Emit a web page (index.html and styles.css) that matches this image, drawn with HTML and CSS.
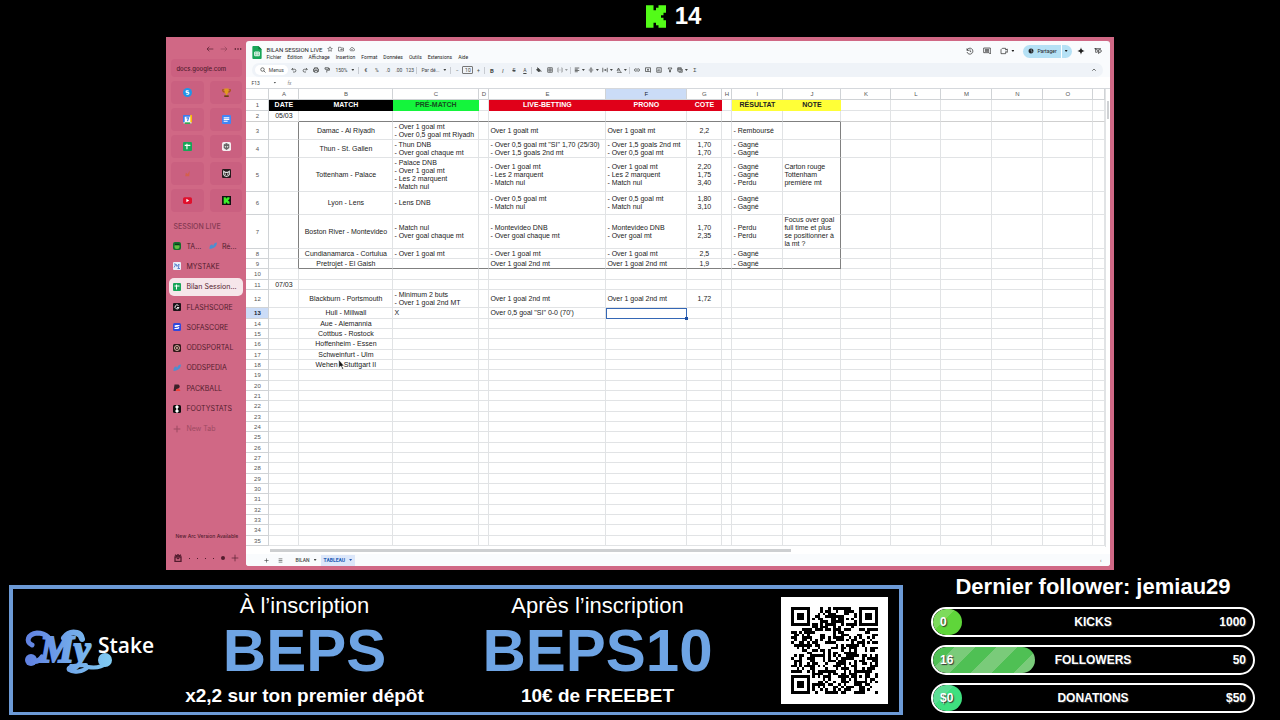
FILE: index.html
```html
<!DOCTYPE html>
<html lang="fr">
<head>
<meta charset="utf-8">
<title>Bilan session live</title>
<link rel="stylesheet" href="styles.css">
</head>
<body>
<svg class="sprite" aria-hidden="true">
  <symbol id="back" viewBox="0 0 24 24"><path d="M22 12H3M10 5l-7 7 7 7"/></symbol>
  <symbol id="fwd" viewBox="0 0 24 24"><path d="M2 12h19M14 5l7 7-7 7"/></symbol>
  <symbol id="dots" viewBox="0 0 24 24"><path d="M2 12h4M10 12h4M18 12h4" stroke-width="4"/></symbol>
  <symbol id="plus" viewBox="0 0 24 24"><path d="M12 2v20M2 12h20"/></symbol>
  <symbol id="star" viewBox="0 0 24 24"><path d="M12 3l3 6 6 1-4.500 4.500 1 6.500-5.500-3-5.500 3 1-6.500L3 10l6-1z"/></symbol>
  <symbol id="folder" viewBox="0 0 24 24"><path d="M2 5h8l2 3h10v12H2zM9 14h8M14 11l3 3-3 3"/></symbol>
  <symbol id="cloud" viewBox="0 0 24 24"><path d="M7 19h11a4 4 0 0 0 1-8 7 7 0 0 0-13-1 5 5 0 0 0 1 9zM8 13l3 3 5-5"/></symbol>
  <symbol id="search" viewBox="0 0 24 24"><circle cx="10" cy="10" r="7"/><path d="M15 15l7 7"/></symbol>
  <symbol id="undo" viewBox="0 0 24 24"><path d="M8 4L3 9l5 5M3 9h11a5 5 0 0 1 0 11H8"/></symbol>
  <symbol id="redo" viewBox="0 0 24 24"><path d="M16 4l5 5-5 5M21 9H10a5 5 0 0 0 0 11h6"/></symbol>
  <symbol id="print" viewBox="0 0 24 24"><path d="M6 8V3h12v5M6 18H2V8h20v10h-4M6 14h12v7H6z"/></symbol>
  <symbol id="roller" viewBox="0 0 24 24"><path d="M4 3h14v6H4zM18 6h4v7H11v9" /></symbol>
  <symbol id="fill" viewBox="0 0 24 24"><path d="M5 2l13 11-7 7-9-9 7-7" fill="currentColor"/><path d="M20 15v5"/></symbol>
  <symbol id="grid" viewBox="0 0 24 24"><path d="M3 3h18v18H3zM12 3v18M3 12h18"/></symbol>
  <symbol id="merge" viewBox="0 0 24 24"><path d="M8 4H3v16h5M16 4h5v16h-5M3 12h7M14 12h7"/></symbol>
  <symbol id="align" viewBox="0 0 24 24"><path d="M3 4h18M3 9h12M3 14h18M3 19h12"/></symbol>
  <symbol id="valign" viewBox="0 0 24 24"><path d="M3 12h18M12 1v8M9 6l3 3 3-3M12 23v-8M9 18l3-3 3 3"/></symbol>
  <symbol id="wrap" viewBox="0 0 24 24"><path d="M3 3v18M21 3v18M7 12h9M13 8l4 4-4 4"/></symbol>
  <symbol id="rotate" viewBox="0 0 24 24"><path d="M4 16l6-12 6 12M6 12h8M4 21h17M18 18l3 3-3 3"/></symbol>
  <symbol id="link" viewBox="0 0 24 24"><path d="M10 7H7a5 5 0 0 0 0 10h3M14 7h3a5 5 0 0 1 0 10h-3M8 12h8"/></symbol>
  <symbol id="comment" viewBox="0 0 24 24"><path d="M2 3h20v18l-4-3H2zM12 7v8M8 11h8"/></symbol>
  <symbol id="chart" viewBox="0 0 24 24"><path d="M3 3h18v18H3zM8 17v-6M12 17V7M16 17v-3"/></symbol>
  <symbol id="funnel" viewBox="0 0 24 24"><path d="M4 4h16l-6 8v8h-4v-8z"/></symbol>
  <symbol id="views" viewBox="0 0 24 24"><path d="M3 3h14v14H3zM7 21h14V8M3 7h14M3 11h14" stroke-width="3"/></symbol>
  <symbol id="history" viewBox="0 0 24 24"><path d="M3 4v6h6M3 10a9 9 0 1 1 0 5M12 7v6l4 2"/></symbol>
  <symbol id="notes" viewBox="0 0 24 24"><path d="M2 3h20v18l-4-4H2zM6 7h12M6 10h12M6 13h12"/></symbol>
  <symbol id="camera" viewBox="0 0 24 24"><path d="M7 4h10v5l5-3v10l-5-2v6H3V8z"/></symbol>
  <symbol id="globe" viewBox="0 0 24 24"><circle cx="12" cy="12" r="9" fill="currentColor"/><path d="M14 5l-3 4 5 3-1 6" stroke="#c2e7ff"/></symbol>
  <symbol id="spark" viewBox="0 0 24 24"><path d="M12 1c1 7 4 10 11 11-7 1-10 4-11 11-1-7-4-10-11-11 7-1 10-4 11-11z" fill="currentColor" stroke="none"/></symbol>
  <symbol id="account" viewBox="0 0 24 24"><path d="M5 3v13h3a4 4 0 0 0 0-8H5M14 21V8h4a4 4 0 0 1 0 8h-4M1 5h20"/></symbol>
  <symbol id="up" viewBox="0 0 24 24"><path d="M5 15l7-7 7 7"/></symbol>
  <symbol id="list" viewBox="0 0 24 24"><path d="M3 4h18M3 12h18M3 20h18"/></symbol>
  <symbol id="archive" viewBox="0 0 24 24"><path d="M3 9h18v13H3zM3 2l5 4 4-4 4 4 5-4M8 14h8" stroke-width="4"/></symbol>
  <symbol id="sheets" viewBox="0 0 16 16"><rect width="16" height="16" rx="2" fill="#18a558" stroke="none"/><path d="M3 6h10M7 3v10" stroke="#fff" stroke-width="2"/></symbol>
  <symbol id="leaf" viewBox="0 0 16 16"><path d="M1 14c0-7 2-9 6-9l1 3c2-5 4-7 8-7-1 8-5 12-15 13z" fill="#4d8fd0" stroke="none"/></symbol>
</svg>

<header class="counter">
  <svg class="kick" viewBox="0 0 8 9"><path d="M0 0h3v2h1V1h1V0h3v3H7v1H6v1h1v1h1v3H5V8H4V7H3v2H0z"/></svg>
  <span>14</span>
</header>

<main class="stage">
  <div class="window">
    <aside class="sidebar">
      <div class="nav">
        <button aria-label="Retour"><svg><use href="#back"/></svg></button>
        <button class="dim" aria-label="Suivant"><svg><use href="#fwd"/></svg></button>
        <button aria-label="Plus"><svg><use href="#dots"/></svg></button>
      </div>
      <button class="address">docs.google.com</button>
      <div class="pins">
        <button aria-label="Shazam"><svg viewBox="0 0 16 16"><circle cx="8" cy="8" r="8" fill="#2196e8"/><path d="M10 5H7a1 1 0 0 0 0 3h2a1 1 0 0 1 0 3H6" fill="none" stroke="#fff" stroke-width="2"/></svg></button>
        <button aria-label="Trophée"><svg viewBox="0 0 16 16"><path d="M4 1h8v5q0 4-3 4v3h3v2H4v-2h3v-3Q4 10 4 6z" fill="#e09a1c"/><path d="M4 3H1q0 4 4 4M12 3h3q0 4-4 4" fill="none" stroke="#a8551a" stroke-width="2"/><path d="M4 13h8v3H4z" fill="#6a3a1c"/></svg></button>
        <button aria-label="Agenda"><svg viewBox="0 0 16 16"><path d="M1 1h14v14H1z" fill="#fff"/><path d="M1 0h12v3H3v10H0V1z" fill="#3b7ded"/><path d="M13 0h3v13h-3z" fill="#fbbc04"/><path d="M3 13h10v3H3z" fill="#34a853"/><path d="M6 5h4l-2 6" fill="none" stroke="#3b7ded" stroke-width="2"/></svg></button>
        <button aria-label="Docs"><svg viewBox="0 0 16 16"><rect width="16" height="16" rx="2" fill="#4285f4"/><path d="M3 5h10M3 8h10M3 11h7" stroke="#fff" stroke-width="2"/></svg></button>
        <button aria-label="Sheets"><svg><use href="#sheets"/></svg></button>
        <button aria-label="ChatGPT"><svg viewBox="0 0 16 16"><rect width="16" height="16" rx="3" fill="#f4eef0"/><path d="M8 3l4 2v5l-4 3-4-3V5zM4 5l8 5M12 5l-8 5M8 3v10" fill="none" stroke="#666"/></svg></button>
        <button aria-label="Favori"><svg viewBox="0 0 16 16"><path d="M4 13l1-7 3 3 4-6-1 10z" fill="#d4604e"/></svg></button>
        <button aria-label="Chat"><svg viewBox="0 0 16 16"><rect width="16" height="16" rx="2" fill="#241a1c"/><path d="M3 4l3 2h4l3-2v6q-1 3-5 3t-5-3zM5 9h2M9 9h2" fill="none" stroke="#ddd"/></svg></button>
        <button aria-label="YouTube"><svg viewBox="0 0 16 16"><rect y="2" width="16" height="12" rx="3" fill="#e0102c"/><path d="M6 5l5 3-5 3z" fill="#fff"/></svg></button>
        <button aria-label="Kick"><svg viewBox="0 0 16 16"><rect width="16" height="16" fill="#111"/><path transform="translate(3 2) scale(1.3)" d="M0 0h3v2h1V1h1V0h3v3H7v1H6v1h1v1h1v3H5V8H4V7H3v2H0z" fill="#3df02c"/></svg></button>
      </div>
      <h2>SESSION LIVE</h2>
      <nav class="tabs">
        <div class="split">
          <a href="#"><svg viewBox="0 0 16 16"><rect width="16" height="16" rx="4" fill="#12702c"/><circle cx="8" cy="9" r="5" fill="#62c043"/><path d="M4 5h9" stroke="#0a3918" stroke-width="3"/></svg>TA...</a>
          <a href="#"><svg><use href="#leaf"/></svg>Ré...</a>
        </div>
        <a href="#"><svg viewBox="0 0 16 16"><rect width="16" height="16" rx="2" fill="#e9eef8"/><path d="M2 11l4-7 2 5 4-5-1 8M2 4h3M9 13h5" fill="none" stroke="#5a82cd" stroke-width="2"/></svg>MYSTAKE</a>
        <a href="#" class="active"><svg><use href="#sheets"/></svg>Bilan Session...</a>
        <a href="#"><svg viewBox="0 0 16 16"><rect width="16" height="16" rx="2" fill="#1c1418"/><path d="M11 5a4 4 0 1 0 1 4H8" fill="none" stroke="#eee" stroke-width="2"/></svg>FLASHSCORE</a>
        <a href="#"><svg viewBox="0 0 16 16"><rect width="16" height="16" rx="3" fill="#3048dc"/><path d="M13 5H5q-2 0-1 2l7 1q2 3-1 3H3" fill="none" stroke="#fff" stroke-width="2"/></svg>SOFASCORE</a>
        <a href="#"><svg viewBox="0 0 16 16"><rect width="16" height="16" rx="3" fill="#32191a"/><circle cx="8" cy="8" r="5" fill="none" stroke="#d5b4a4" stroke-width="2"/><circle cx="8" cy="8" r="2" fill="#d5b4a4"/></svg>ODDSPORTAL</a>
        <a href="#"><svg><use href="#leaf"/></svg>ODDSPEDIA</a>
        <a href="#"><svg viewBox="0 0 16 16"><path d="M3 1h8q5 4 0 8l-4 1-2 4H1z" fill="#3b2028"/><path d="M6 11l6-2 3 5H6z" fill="#ef4139"/></svg>PACKBALL</a>
        <a href="#"><svg viewBox="0 0 16 16"><rect width="16" height="16" rx="3" fill="#0c0c0c"/><path d="M8 2v12M5 5l3-3 3 3M5 11l3 3 3-3" fill="none" stroke="#fff" stroke-width="3"/></svg>FOOTYSTATS</a>
        <a href="#" class="new"><svg><use href="#plus"/></svg>New Tab</a>
      </nav>
      <p class="update">New Arc Version Available</p>
      <div class="spaces">
        <svg><use href="#archive"/></svg><i></i><i></i><i></i><i></i><i class="on"></i>
        <button aria-label="Nouveau"><svg><use href="#plus"/></svg></button>
      </div>
    </aside>

    <section class="sheet">
      <div class="docbar">
        <svg class="doclogo" viewBox="0 0 20 28"><path d="M2 0h11l7 7v19a2 2 0 0 1-2 2H2a2 2 0 0 1-2-2V2a2 2 0 0 1 2-2z" fill="#18a558"/><path d="M13 0l7 7h-7z" fill="#0c7a3c"/><path d="M5 13h10v8H5zM5 17h10M10 13v8" fill="none" stroke="#fff" stroke-width="2"/></svg>
        <div class="doctitle">
          <h1>BILAN SESSION LIVE <svg><use href="#star"/></svg><svg><use href="#folder"/></svg><svg><use href="#cloud"/></svg></h1>
          <div class="menus"><button>Fichier</button><button>Édition</button><button>Affichage</button><button>Insertion</button><button>Format</button><button>Données</button><button>Outils</button><button>Extensions</button><button>Aide</button></div>
        </div>
        <div class="actions">
          <button aria-label="Historique"><svg><use href="#history"/></svg></button>
          <button aria-label="Commentaires"><svg><use href="#notes"/></svg></button>
          <button class="meet caret" aria-label="Réunion"><svg><use href="#camera"/></svg></button>
          <div class="share"><button><svg><use href="#globe"/></svg>Partager</button><button class="more caret" aria-label="Options de partage"></button></div>
          <button aria-label="Gemini"><svg><use href="#spark"/></svg></button>
          <button aria-label="Compte"><svg><use href="#account"/></svg></button>
        </div>
      </div>

      <div class="toolbar">
        <button class="search"><svg><use href="#search"/></svg>Menus</button>
        <button aria-label="Annuler"><svg><use href="#undo"/></svg></button>
        <button aria-label="Rétablir"><svg><use href="#redo"/></svg></button>
        <button aria-label="Imprimer"><svg><use href="#print"/></svg></button>
        <button aria-label="Mise en forme"><svg><use href="#roller"/></svg></button>
        <span class="pick zoom caret"><select aria-label="Zoom"><option>150%</option></select></span>
        <hr>
        <button>€</button><button>%</button><button>.0</button><button>.00</button><button>123</button>
        <hr>
        <span class="pick font caret"><select aria-label="Police"><option>Par dé...</option></select></span>
        <hr>
        <button class="step">−</button><input class="size" aria-label="Taille" value="10"><button class="step">+</button>
        <hr>
        <button><b>B</b></button><button><em>I</em></button><button><s>S</s></button><button><u>A</u></button>
        <hr>
        <button aria-label="Remplissage"><svg><use href="#fill"/></svg></button>
        <button aria-label="Bordures"><svg><use href="#grid"/></svg></button>
        <button class="wide caret dim" aria-label="Fusionner"><svg><use href="#merge"/></svg></button>
        <hr>
        <button class="wide caret" aria-label="Alignement"><svg><use href="#align"/></svg></button>
        <button class="wide caret" aria-label="Alignement vertical"><svg><use href="#valign"/></svg></button>
        <button class="wide caret" aria-label="Retour à la ligne"><svg><use href="#wrap"/></svg></button>
        <button class="wide caret" aria-label="Rotation"><svg><use href="#rotate"/></svg></button>
        <hr>
        <button aria-label="Lien"><svg><use href="#link"/></svg></button>
        <button aria-label="Commentaire"><svg><use href="#comment"/></svg></button>
        <button aria-label="Graphique"><svg><use href="#chart"/></svg></button>
        <button aria-label="Filtre"><svg><use href="#funnel"/></svg></button>
        <button class="wide caret" aria-label="Vues"><svg><use href="#views"/></svg></button>
        <button>Σ</button>
        <button class="collapse" aria-label="Réduire"><svg><use href="#up"/></svg></button>
      </div>

      <div class="formula">
        <span class="pick caret"><input aria-label="Cellule" value="F13"></span>
        <label for="fx">fx</label><input id="fx">
      </div>

      <div class="gridwrap">
        <table>
          <colgroup><col class="c0"><col class="cA"><col class="cB"><col class="cC"><col class="cD"><col class="cE"><col class="cF"><col class="cG"><col class="cD"><col class="cI"><col class="cJ"><col class="cK"><col class="cK"><col class="cM"><col class="cM"><col class="cK"><col></colgroup>
          <thead>
            <tr><th></th><th>A</th><th>B</th><th>C</th><th>D</th><th>E</th><th class="sel">F</th><th>G</th><th>H</th><th>I</th><th>J</th><th>K</th><th>L</th><th>M</th><th>N</th><th>O</th><th></th></tr>
          </thead>
          <tbody id="cells">
            <tr class="h11 titles"><th>1</th><td class="black">DATE</td><td class="black">MATCH</td><td class="green">PRÉ-MATCH</td><td></td><td class="red">LIVE-BETTING</td><td class="red">PRONO</td><td class="red">COTE</td><td></td><td class="yellow">RÉSULTAT</td><td class="yellow">NOTE</td></tr>
            <tr class="h11 frozen"><th>2</th><td>05/03</td></tr>
            <tr class="h18 boxed"><th>3</th><td></td><td>Damac - Al Riyadh</td><td>- Over 1 goal mt<br>- Over 0,5 goal mt Riyadh</td><td></td><td>Over 1 goalt mt</td><td>Over 1 goalt mt</td><td>2,2</td><td></td><td>- Remboursé</td><td></td></tr>
            <tr class="h18 boxed"><th>4</th><td></td><td>Thun - St. Gallen</td><td>- Thun DNB<br>- Over goal chaque mt</td><td></td><td>- Over 0,5 goal mt "SI" 1,70 (25/30)<br>- Over 1,5 goals 2nd mt</td><td>- Over 1,5 goals 2nd mt<br>- Over 0,5 goal mt</td><td>1,70<br>1,70</td><td></td><td>- Gagné<br>- Gagné</td><td></td></tr>
            <tr class="h34 boxed"><th>5</th><td></td><td>Tottenham - Palace</td><td>- Palace DNB<br>- Over 1 goal mt<br>- Les 2 marquent<br>- Match nul</td><td></td><td>- Over 1 goal mt<br>- Les 2 marquent<br>- Match nul</td><td>- Over 1 goal mt<br>- Les 2 marquent<br>- Match nul</td><td>2,20<br>1,75<br>3,40</td><td></td><td>- Gagné<br>- Gagné<br>- Perdu</td><td>Carton rouge<br>Tottenham<br>première mt</td></tr>
            <tr class="h23 boxed"><th>6</th><td></td><td>Lyon - Lens</td><td>- Lens DNB</td><td></td><td>- Over 0,5 goal mt<br>- Match nul</td><td>- Over 0,5 goal mt<br>- Match nul</td><td>1,80<br>3,10</td><td></td><td>- Gagné<br>- Gagné</td><td></td></tr>
            <tr class="h34 boxed"><th>7</th><td></td><td>Boston River - Montevideo</td><td>- Match nul<br>- Over goal chaque mt</td><td></td><td>- Montevideo DNB<br>- Over goal chaque mt</td><td>- Montevideo DNB<br>- Over goal mt</td><td>1,70<br>2,35</td><td></td><td>- Perdu<br>- Perdu</td><td>Focus over goal<br>full time et plus<br>se positionner à<br>la mt ?</td></tr>
            <tr class="h10 boxed"><th>8</th><td></td><td>Cundianamarca - Cortulua</td><td>- Over 1 goal mt</td><td></td><td>- Over 1 goal mt</td><td>- Over 1 goal mt</td><td>2,5</td><td></td><td>- Gagné</td><td></td></tr>
            <tr class="h10 boxed last"><th>9</th><td></td><td>Pretrojet - El Gaish</td><td></td><td></td><td>Over 1 goal 2nd mt</td><td>Over 1 goal 2nd mt</td><td>1,9</td><td></td><td>- Gagné</td><td></td></tr>
            <tr class="h11"><th>10</th></tr>
            <tr class="h10"><th>11</th><td>07/03</td></tr>
            <tr class="h18"><th>12</th><td></td><td>Blackburn - Portsmouth</td><td>- Minimum 2 buts<br>- Over 1 goal 2nd MT</td><td></td><td>Over 1 goal 2nd mt</td><td>Over 1 goal 2nd mt</td><td>1,72</td></tr>
            <tr class="h11"><th class="sel">13</th><td></td><td>Hull - Millwall</td><td>X</td><td></td><td>Over 0,5 goal "SI" 0-0 (70')</td><td class="cursor"></td></tr>
            <tr class="h10"><th>14</th><td></td><td>Aue - Alemannia</td></tr>
            <tr class="h10"><th>15</th><td></td><td>Cottbus - Rostock</td></tr>
            <tr class="h11"><th>16</th><td></td><td>Hoffenheim - Essen</td></tr>
            <tr class="h10"><th>17</th><td></td><td>Schweinfurt - Ulm</td></tr>
            <tr class="h10"><th>18</th><td></td><td class="pointed">Wehen - Stuttgart II<svg class="pointer" viewBox="0 0 10 16"><path d="M1 1v12l3-3 2 5 2-1-2-4h3z" fill="#111" stroke="#fff"/></svg></td></tr>
          </tbody>
        </table>
        <div class="vscroll"><i></i></div>
      </div>
      <div class="hscroll"><i></i></div>
      <div class="sheettabs">
        <button aria-label="Ajouter"><svg><use href="#plus"/></svg></button>
        <button aria-label="Feuilles"><svg><use href="#list"/></svg></button>
        <button class="tab caret">BILAN</button>
        <button class="tab caret current">TABLEAU</button>
        <span class="chev">‹</span>
      </div>
    </section>
  </div>
</main>

<footer class="overlay">
  <section class="banner">
    <svg class="logo" viewBox="0 0 132 54" role="img" aria-label="MyStake">
      <defs><linearGradient id="blue" gradientUnits="userSpaceOnUse" x1="0" y1="0" x2="90" y2="0"><stop offset="0" stop-color="#6080e2"/><stop offset="1" stop-color="#82cdf2"/></linearGradient></defs>
      <g fill="none" stroke="url(#blue)" stroke-linecap="round">
        <path d="M8 17C1 14 4 6 13 5q7 0 11 4" stroke-width="5"/>
        <path d="M7 33q7 2 11-4" stroke-width="5"/>
        <path d="M40 10q5-7 13-5 4 1 5 6" stroke-width="6"/>
        <path d="M62 37c-7 0-20 1-17 5 4 3 14 2 19-3q12 2 18-4" stroke-width="4"/>
      </g>
      <circle cx="7" cy="32" r="6" fill="url(#blue)"/><circle cx="81" cy="32" r="7" fill="url(#blue)"/>
      <text x="16" y="34" class="my" fill="url(#blue)" stroke="url(#blue)">My</text>
      <text x="74" y="25" class="stake">Stake</text>
    </svg>
    <div class="offer"><p>À l’inscription</p><strong>BEPS</strong><b>x2,2 sur ton premier dépôt</b></div>
    <div class="offer"><p>Après l’inscription</p><strong>BEPS10</strong><b>10€ de FREEBET</b></div>
    <svg class="qr" viewBox="-4 -4 41 41" shape-rendering="crispEdges" role="img" aria-label="QR code"><path id="modules"/></svg>
  </section>
  <section class="goals">
    <h2>Dernier follower: jemiau29</h2>
    <div class="goal kicks"><i style="width:9%"></i><span>0</span><b>KICKS</b><span>1000</span></div>
    <div class="goal followers"><i style="width:32%"></i><span>16</span><b>FOLLOWERS</b><span>50</span></div>
    <div class="goal donations"><i style="width:9%"></i><span>$0</span><b>DONATIONS</b><span>$50</span></div>
  </section>
</footer>
<script src="script.js"></script>
</body>
</html>
```
FILE: styles.css
```css
* { box-sizing: border-box; }
body {
  margin: 0; height: 100vh; background: #000; color: #fff;
  font-family: "Liberation Sans", Arial, sans-serif;
  display: flex; flex-direction: column; overflow: hidden;
}
h1, h2, p { margin: 0; font-weight: inherit; }
a { color: inherit; text-decoration: none; }
button, input, select {
  font: inherit; color: inherit; background: none; border: 0; padding: 0; margin: 0;
  min-width: 0; appearance: none; border-radius: 0;
}
.sprite { position: absolute; width: 0; height: 0; }
svg { display: block; flex: none; }
button svg, .docbar svg, .spaces svg { stroke: currentColor; stroke-width: 2; fill: none; }
.pins svg { stroke: none; }

.counter { height: 37px; flex: none; display: flex; justify-content: center; align-items: center; gap: 9px; padding: 0 0 5px 67px; font-size: 24px; font-weight: bold; }
.kick { width: 20px; height: 23px; fill: #53fc18; }

.stage { flex: 1; min-height: 0; display: flex; padding: 0 13%; }
.window { flex: 1; min-width: 0; min-height: 0; display: flex; background: #d06885; padding: 4px 4px 4px 0; font-family: Inter, sans-serif; }

.sidebar { width: 80px; flex: none; padding: 2px 4px 0 5px; display: flex; flex-direction: column; color: #531c2e; }
.nav { display: flex; justify-content: flex-end; gap: 6px; height: 12px; align-items: center; }
.nav svg { width: 8px; height: 8px; }
.dim { opacity: .5; }
.address { height: 18px; flex: none; margin-top: 4px; padding-left: 5px; text-align: left; font-size: 6px; font-weight: 500; border-radius: 4px; background: #cb6080; }
.pins { margin-top: 4px; display: grid; grid-template-columns: 1fr 1fr; gap: 4px 6px; }
.pins button { height: 23px; border-radius: 4px; background: #ca6080; display: grid; place-items: center; }
.pins svg { width: 9px; height: 9px; }
.sidebar h2 { margin: 8px 0 0 2px; height: 14px; line-height: 14px; font-size: 7px; color: #843952; font-weight: 500; }
.tabs { display: grid; grid-auto-rows: 1fr; height: 203px; flex: none; margin-top: 2px; font-size: 7px; }
.tabs a { display: flex; align-items: center; gap: 5px; padding-left: 2px; margin: 1px 0; border-radius: 5px; white-space: nowrap; }
.tabs svg { width: 8px; height: 8px; stroke: currentColor; stroke-width: 0; }
.tabs .active { background: #f6e6ea; margin-left: -2px; margin-right: -1px; padding-left: 4px; }
.tabs .new { opacity: .4; }
.tabs .new svg { stroke-width: 3; }
.split { display: grid; grid-template-columns: 1fr 1fr; }
.update { margin-top: auto; font-size: 5px; line-height: 8px; white-space: nowrap; text-align: center; font-weight: 500; }
.spaces { display: flex; flex: none; align-items: center; justify-content: space-between; height: 14px; margin: 11px 3px 1px; }
.spaces svg { width: 8px; height: 8px; }
.spaces i { width: 1px; height: 1px; background: currentColor; }
.spaces .on { width: 4px; height: 4px; border-radius: 2px; }

.sheet { flex: 1; min-width: 0; background: #f9fbfd; border-radius: 3px; overflow: hidden; display: flex; flex-direction: column; color: #444746; font-family: Roboto, sans-serif; }
.caret::after { content: ""; flex: none; width: 3px; height: 2px; background: currentColor; clip-path: polygon(0 0, 100% 0, 50% 100%); }
.docbar { height: 22px; flex: none; display: flex; padding-left: 6px; gap: 4px; }
.doclogo { width: 10px; height: 13px; margin-top: 5px; }
.docbar .doclogo { stroke: none; }
.doctitle h1 { display: flex; align-items: center; gap: 5px; margin-top: 4px; height: 8px; font-size: 6px; color: #1f1f1f; white-space: nowrap; }
.doctitle h1 svg { width: 6px; height: 6px; }
.menus { display: flex; gap: 6px; height: 8px; font-size: 5px; color: #1f1f1f; align-items: center; }
.actions { margin-left: auto; display: flex; align-items: center; height: 20px; gap: 9px; padding-right: 8px; color: #1f1f1f; }
.actions svg { width: 8px; height: 8px; }
.meet { display: flex; align-items: center; gap: 3px; }
.share { display: flex; height: 13px; border-radius: 7px; overflow: hidden; background: #b5e1f5; font-size: 5px; margin-right: -4px; }
.share button { display: flex; align-items: center; gap: 3px; padding: 0 4px 0 5px; }
.actions .share svg { width: 6px; height: 6px; }
.share .more { border-left: 1px solid #fff; padding: 0 4px 0 3px; }

.toolbar { height: 14px; flex: none; margin: 0 7px 0 6px; padding-left: 3px; border-radius: 7px; background: #eff3f8; display: flex; align-items: center; font-size: 5px; }
.toolbar button { width: 11px; height: 10px; flex: none; display: flex; align-items: center; justify-content: center; gap: 2px; }
.toolbar svg { width: 6px; height: 6px; stroke-width: 3; }
.toolbar .wide { width: 14px; }
.toolbar .step { width: 10px; }
.toolbar .search { width: 33px; background: #fff; border-radius: 5px; gap: 3px; }
.toolbar hr { width: 1px; height: 7px; margin: 0 1px; border: 0; background: #c7cbd1; flex: none; }
.toolbar b, .toolbar em { font-size: 6px; }
.pick { display: flex; align-items: center; justify-content: space-between; }
.zoom { width: 25px; padding: 0 3px; }
.font { width: 31px; padding: 0 3px; }
.size { width: 11px; height: 8px; border: 1px solid #777; border-radius: 1px; text-align: center; }
.toolbar .collapse { margin: 0 3px 0 auto; }

.formula { height: 12px; flex: none; background: #fff; display: flex; align-items: center; font-size: 5px; border-bottom: 1px solid #d5d8dc; gap: 9px; }
.formula .pick { width: 32px; padding: 0 2px 0 5px; }
.formula .pick input { width: 20px; }
.formula label { font-style: italic; color: #888; }
.formula > input { flex: 1; }

.gridwrap { display: flex; flex: 1; background: #fff; min-height: 0; overflow: hidden; }
table { flex: 1; width: 100%; table-layout: fixed; border-collapse: separate; border-spacing: 0; font: 7px/8px "Liberation Sans", Arial, sans-serif; color: #222; align-self: flex-start; }
.c0 { width: 23px; } .cA { width: 30px; } .cB { width: 94px; } .cC { width: 86px; } .cD { width: 10px; }
.cE { width: 117px; } .cF { width: 81px; } .cG { width: 35px; } .cI { width: 51px; } .cJ { width: 58px; }
.cK { width: 50px; } .cM { width: 51px; }
th, td { padding: 0 0 0 1px; border-right: 1px solid #e1e3e5; border-bottom: 1px solid #e1e3e5; white-space: nowrap; vertical-align: middle; }
th { padding: 0; font-weight: normal; font-size: 6px; color: #555; border-color: #d0d3d6; text-align: center; }
thead th { height: 11px; }
.sel { background: #cbdcf7; color: #123; }
tbody .sel { font-weight: bold; }
td:nth-child(2), td:nth-child(3), td:nth-child(8) { text-align: center; padding: 0; }
.h10 > * { height: 10px; } .h11 > * { height: 11px; } .h18 > * { height: 18px; } .h23 > * { height: 23px; } .h34 > * { height: 34px; }
.titles td { font-weight: bold; text-align: center; padding: 0; }
.titles .black { background: #000; color: #fff; border-color: #000; }
.titles .green { background: #14f53c; color: #14501f; border-color: #14f53c; }
.titles .red { background: #e00019; color: #fff; border-color: #e00019; }
.titles .yellow { background: #ffff37; color: #222; border-color: #ffff37; }
.frozen > * { border-bottom-color: #cfcfcf; }
.frozen > :nth-child(n+3):nth-child(-n+11) { border-bottom-color: #808080; }
.boxed td:nth-child(2), .boxed td:nth-child(11) { border-right-color: #808080; }
.last td:nth-child(n+3):nth-child(-n+11) { border-bottom-color: #808080; }
.cursor { outline: 1px solid #3567b5; outline-offset: -1px; position: relative; }
.cursor::after { content: ""; position: absolute; right: -2px; bottom: -2px; width: 3px; height: 3px; background: #1d4fa5; }
.pointed { position: relative; }
.pointer { position: absolute; left: 39px; top: -1px; width: 7px; height: 11px; }
.vscroll { width: 5px; flex: none; padding: 12px 1px 0; border-left: 1px solid #e1e3e5; }
.vscroll i { display: block; height: 18px; background: #cfd1d4; }
.hscroll { height: 7px; flex: none; background: #fff; padding: 2px 0 2px 24px; }
.hscroll i { display: block; width: 62%; height: 3px; background: #cdcfd1; }
.sheettabs { height: 12px; flex: none; display: flex; align-items: center; font-size: 5px; padding-left: 18px; gap: 9px; background: #f9fbfd; }
.sheettabs svg { width: 5px; height: 5px; stroke-width: 3; }
.sheettabs .tab { height: 11px; padding: 0 3px; display: flex; align-items: center; gap: 4px; font-weight: 500; }
.sheettabs .tab + .tab { margin-left: -8px; }
.sheettabs .current { background: #dce7fa; color: #245bb5; font-weight: bold; }
.chev { margin-left: auto; padding-right: 8px; }

.overlay { height: 150px; flex: none; display: grid; grid-template-columns: 894fr 324fr; gap: 28px; padding: 5px 25px 5px 9px; }
.banner { margin-top: 10px; border: 4px solid #6c9ad6; border-bottom-width: 3px; display: grid; grid-template-columns: 145px 1fr 1fr 155px; align-items: center; }
.logo { width: 132px; height: 54px; margin: 8px 0 0 11px; overflow: visible; }
.my { font: italic bold 38px "Liberation Serif", serif; stroke-width: 2px; }
.stake { font: 600 21px "Open Sans", sans-serif; fill: #fff; }
.offer { text-align: center; display: flex; flex-direction: column; align-items: center; font-size: 19px; line-height: 24px; white-space: nowrap; }
.offer p { font-size: 22px; }
.offer strong { font-size: 60px; line-height: 66px; color: #6ea4e4; }
.qr { width: 107px; height: 107px; background: #fff; justify-self: end; margin-right: 11px; }
.goals { display: flex; flex-direction: column; gap: 8px; }
.goals h2 { font-size: 22px; line-height: 24px; font-weight: bold; text-align: center; white-space: nowrap; }
.goal { position: relative; height: 30px; border: 2px solid #fff; border-radius: 15px; overflow: hidden; display: grid; grid-template-columns: 1fr auto 1fr; align-items: center; padding: 0 7px; font-size: 12px; font-weight: bold; text-shadow: 1px 1px 1px #333; }
.goal > * { position: relative; }
.goal span:last-child { text-align: right; }
.goal i { position: absolute; left: 0; top: 0; bottom: 0; border-radius: 13px; }
.kicks i { background: linear-gradient(135deg, #7ddb5c 40%, #5fd63a 40%); }
.followers i { background: repeating-linear-gradient(135deg, #4fc054 0 15px, #7acb7a 15px 30px); }
.donations i { background: linear-gradient(135deg, #5cde95 40%, #3fe07f 40%); }
```
FILE: script.js
```js
// Fill the grid: add empty rows up to 35, then pad short rows to full width.
const body = document.getElementById('cells');
for (let n = 19; n <= 35; n++) {
  const row = body.insertRow();
  row.className = n % 3 === 1 ? 'h11' : 'h10';
  const head = document.createElement('th');
  head.textContent = n;
  row.append(head);
}
for (const row of body.rows) {
  while (row.cells.length < 17) row.insertCell();
}

// QR symbol, 33 modules a side.
const N = 33;
let seed = 29;
const random = () => (seed = (seed * 1103515245 + 12345) % 2147483648) / 2147483648;
const ring = (x, y, cx, cy) => Math.max(Math.abs(x - cx), Math.abs(y - cy));
let d = '';
for (let y = 0; y < N; y++) {
  for (let x = 0; x < N; x++) {
    let dark = random() < 0.52;
    for (const [cx, cy] of [[3, 3], [N - 4, 3], [3, N - 4]]) {
      const r = ring(x, y, cx, cy);
      if (r <= 4) dark = r !== 4 && r !== 2;
    }
    const a = ring(x, y, 26, 26);
    if (a <= 2) dark = a !== 1;
    if (dark) d += `M${x} ${y}h1v1h-1z`;
  }
}
document.getElementById('modules').setAttribute('d', d);
```
